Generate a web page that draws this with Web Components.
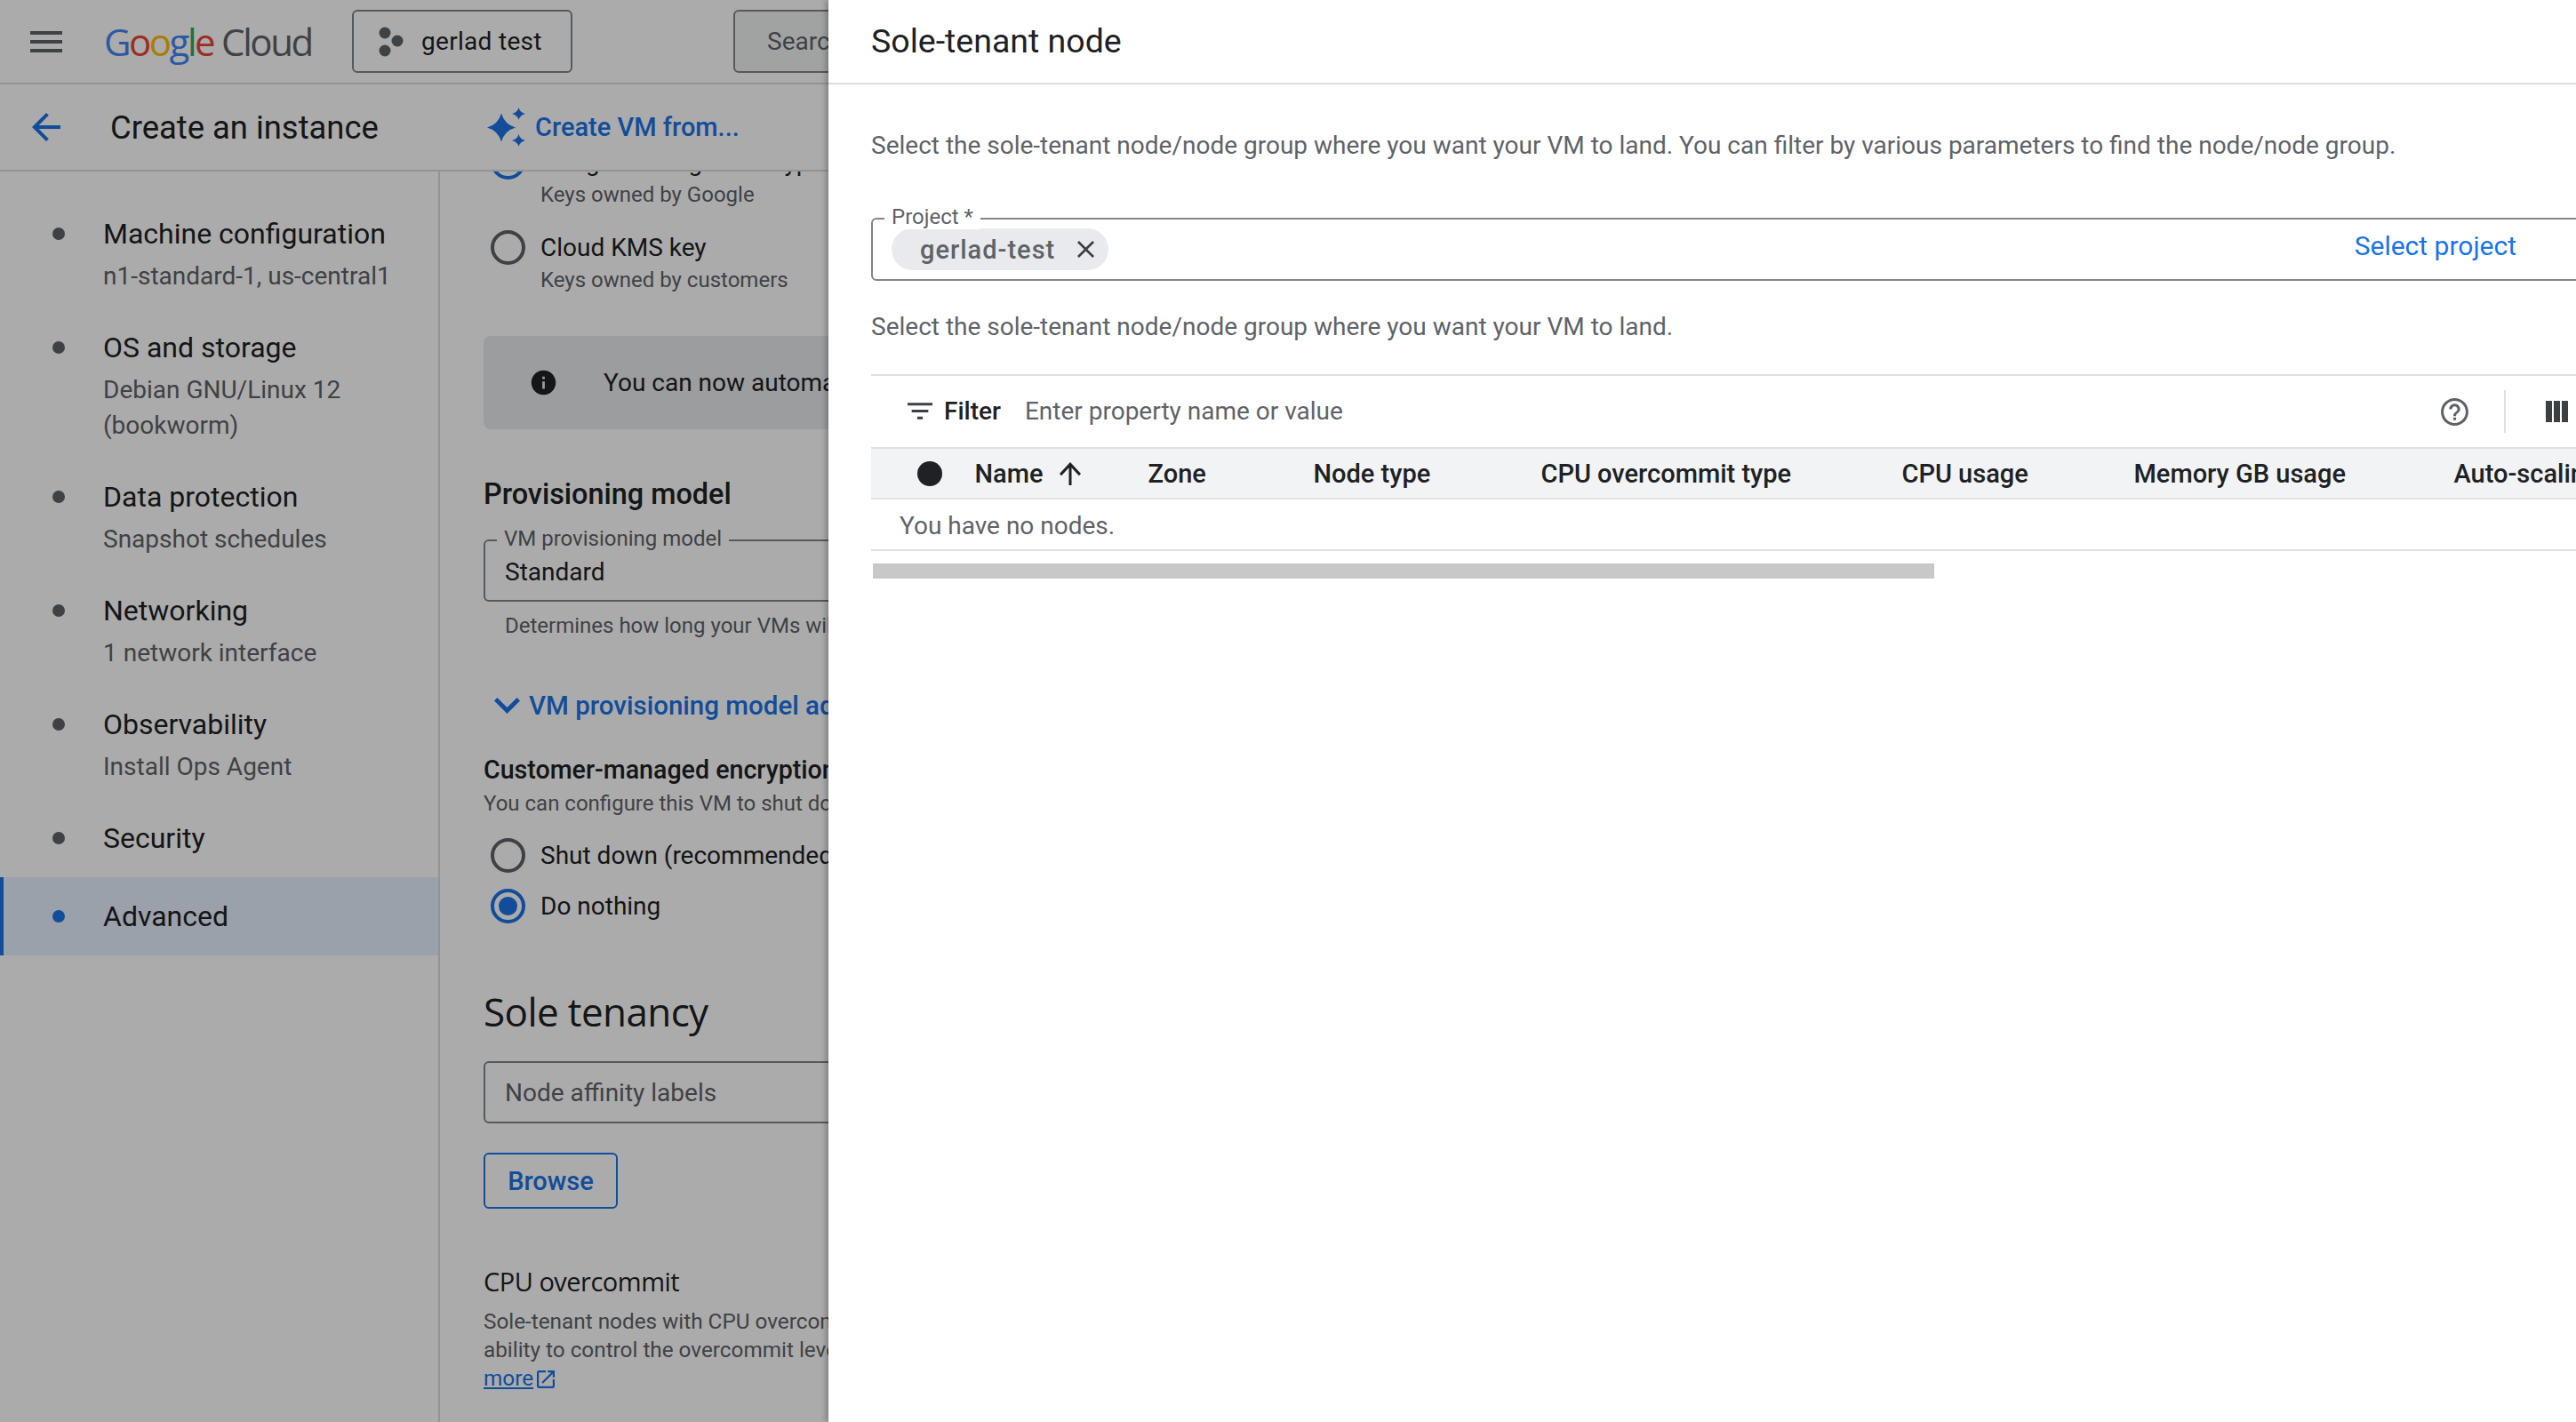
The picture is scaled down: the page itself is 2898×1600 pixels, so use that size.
<!DOCTYPE html>
<html>
<head>
<meta charset="utf-8">
<title>Create an instance</title>
<style>
html, body {margin: 0; height: 1600px; overflow: hidden; background: #fff; font-family: Roboto, "Liberation Sans", sans-serif; color: #202124;}
gc-console {position: relative; width: 2898px; height: 1600px; overflow: hidden;}
</style>
</head>
<body>
<gc-console>
    <gc-top-bar slot="top"></gc-top-bar>
    <gc-page-header slot="top" title-text="Create an instance"></gc-page-header>
    <gc-nav slot="nav">
        <gc-nav-item label="Machine configuration">n1-standard-1, us-central1</gc-nav-item>
        <gc-nav-item label="OS and storage">Debian GNU/Linux 12<br>(bookworm)</gc-nav-item>
        <gc-nav-item label="Data protection">Snapshot schedules</gc-nav-item>
        <gc-nav-item label="Networking">1 network interface</gc-nav-item>
        <gc-nav-item label="Observability">Install Ops Agent</gc-nav-item>
        <gc-nav-item label="Security"></gc-nav-item>
        <gc-nav-item label="Advanced" active></gc-nav-item>
    </gc-nav>
    <gc-instance-form slot="form"></gc-instance-form>
    <gc-node-panel slot="panel"></gc-node-panel>
</gc-console>

<script>
const icons = {
    menu: '<svg width="48" height="48" viewBox="0 0 24 24" fill="#5f6368"><path d="M3 18h18v-2H3v2zm0-5h18v-2H3v2zm0-7v2h18V6H3z"/></svg>',
    back: '<svg width="48" height="48" viewBox="0 0 24 24" fill="#1a73e8"><path d="M20 11H7.830l5.590-5.590L12 4l-8 8 8 8 1.410-1.410L7.830 13H20v-2z"/></svg>',
    spark: '<svg width="43" height="44" viewBox="0 0 43 44" fill="#1a73e8"><path d="M16 6.500Q19.500 19 32 22.500 19.500 26 16 38.500 12.500 26 0 22.500 12.500 19 16 6.500Z"/><path d="M35.500 0Q37 5.500 43 7 37 8.500 35.500 14 34 8.500 28 7 34 5.500 35.500 0Z"/><path d="M35.500 30Q37 35.500 43 37 37 38.500 35.500 44 34 38.500 28 37 34 35.500 35.500 30Z"/></svg>',
    project: '<svg width="30" height="34" viewBox="0 0 30 34" fill="#5f6368"><circle cx="7" cy="7" r="6.500"/><circle cx="7" cy="27" r="6.500"/><circle cx="21" cy="16" r="6.500"/></svg>',
    info: '<svg width="33" height="33" viewBox="0 0 24 24" fill="#202124"><path d="M12 2C6.480 2 2 6.480 2 12s4.480 10 10 10 10-4.480 10-10S17.520 2 12 2zm1 15h-2v-6h2v6zm0-8h-2V7h2v2z"/></svg>',
    chevron: '<svg width="29" height="18" viewBox="6 8.590 12 7.410" fill="#1a73e8"><path d="M16.590 8.590L12 13.170 7.410 8.590 6 10l6 6 6-6z"/></svg>',
    external: '<svg width="20" height="20" viewBox="3 3 18 18" fill="#1a73e8"><path d="M19 19H5V5h7V3H5c-1.110 0-2 .9-2 2v14c0 1.100.89 2 2 2h14c1.100 0 2-.9 2-2v-7h-2v7zM14 3v2h3.590l-9.830 9.830 1.410 1.410L19 6.410V10h2V3h-7z"/></svg>',
    close: '<svg width="19" height="19" viewBox="5 5 14 14" fill="#3c4043"><path d="M19 6.410L17.590 5 12 10.590 6.410 5 5 6.410 10.590 12 5 17.590 6.410 19 12 13.410 17.590 19 19 17.590 13.410 12z"/></svg>',
    filter: '<svg width="28" height="19" viewBox="3 6 18 12" fill="#3c4043"><path d="M10 18h4v-2h-4v2zM3 6v2h18V6H3zm3 7h12v-2H6v2z"/></svg>',
    up: '<svg width="24" height="26" viewBox="4 4 16 16" preserveAspectRatio="none" fill="#202124"><path d="M4 12l1.410 1.410L11 7.830V20h2V7.830l5.580 5.590L20 12l-8-8-8 8z"/></svg>',
    help: '<svg width="31" height="31" viewBox="2 2 20 20" fill="#5f6368"><path d="M11 18h2v-2h-2v2zm1-16C6.480 2 2 6.480 2 12s4.480 10 10 10 10-4.480 10-10S17.520 2 12 2zm0 18c-4.410 0-8-3.590-8-8s3.590-8 8-8 8 3.590 8 8-3.590 8-8 8zm0-14c-2.210 0-4 1.790-4 4h2c0-1.100.9-2 2-2s2 .9 2 2c0 2-3 1.750-3 5h2c0-2.250 3-2.500 3-5 0-2.210-1.790-4-4-4z"/></svg>',
    columns: '<svg width="25" height="24" viewBox="0 0 25 24" fill="#3c4043"><rect width="7" height="24"/><rect x="9" width="7" height="24"/><rect x="18" width="7" height="24"/></svg>'
};

class GcConsole extends HTMLElement {
    constructor() {
        super();
        const root = this.attachShadow({mode: 'open'});
        root.innerHTML = `
            <style>
            :host {display: block;}
            .page {display: flex; flex-direction: column; height: 100%;}
            .main {flex: 1; display: flex; min-height: 0;}
            .scrim {position: absolute; inset: 0; background: rgba(0,0,0,.33);}
            </style>
            <div class="page">
                <slot name="top"></slot>
                <div class="main">
                    <slot name="nav"></slot>
                    <slot name="form"></slot>
                </div>
            </div>
            <div class="scrim"></div>
            <slot name="panel"></slot>
        `;
    }
}

class GcTopBar extends HTMLElement {
    constructor() {
        super();
        const root = this.attachShadow({mode: 'open'});
        root.innerHTML = `
            <style>
            :host {display: flex; align-items: center; height: 93px; border-bottom: 2px solid #dadce0; box-sizing: content-box; padding-left: 28px; background: #fff; flex: none;}
            .menu {display: flex; width: 48px;}
            .logo {margin-left: 41px; font: 42px/1 "Open Sans", sans-serif; letter-spacing: -2.500px; white-space: nowrap; width: 279px;}
            .logo .cloud {color: #5f6368; margin-left: 9px; letter-spacing: -2.400px;}
            .project {display: flex; align-items: center; box-sizing: border-box; width: 248px; height: 71px; border: 2px solid #80868b; border-radius: 6px; padding-left: 28px; font-size: 28px; letter-spacing: .3px;}
            .project span {margin-left: 18px;}
            .search {margin-left: 181px; flex: 1; height: 71px; box-sizing: border-box; border: 2px solid #80868b; border-radius: 6px; background: #f1f3f4; padding-left: 36px; display: flex; align-items: center; font-size: 28px; color: #5f6368;}
            </style>
            <div class="menu">${icons.menu}</div>
            <div class="logo"><span style="color:#4285f4">G</span><span style="color:#ea4335">o</span><span style="color:#fbbc04">o</span><span style="color:#4285f4">g</span><span style="color:#34a853">l</span><span style="color:#ea4335">e</span><span class="cloud">Cloud</span></div>
            <div class="project">${icons.project}<span>gerlad test</span></div>
            <div class="search">Search</div>
        `;
    }
}

class GcPageHeader extends HTMLElement {
    constructor() {
        super();
        const root = this.attachShadow({mode: 'open'});
        root.innerHTML = `
            <style>
            :host {display: flex; align-items: center; height: 96px; border-bottom: 2px solid #dadce0; padding-left: 28px; background: #fff; flex: none;}
            .back {display: flex; width: 48px;}
            h1 {margin: 0 0 0 48px; width: 424px; font-size: 36.400px; font-weight: 400; white-space: nowrap;}
            .spark {display: flex;}
            .from {margin-left: 11px; font-size: 29px; font-weight: 500; color: #1a73e8; white-space: nowrap;}
            </style>
            <div class="back">${icons.back}</div>
            <h1></h1>
            <div class="spark">${icons.spark}</div>
            <div class="from">Create VM from...</div>
        `;
        root.querySelector('h1').textContent = this.getAttribute('title-text');
    }
}

class GcNav extends HTMLElement {
    constructor() {
        super();
        this.attachShadow({mode: 'open'}).innerHTML = `
            <style>
            :host {display: block; box-sizing: border-box; width: 495px; flex: none; padding-top: 26px; border-right: 2px solid #dadce0;}
            </style>
            <slot></slot>
        `;
    }
}

class GcNavItem extends HTMLElement {
    constructor() {
        super();
        const root = this.attachShadow({mode: 'open'});
        root.innerHTML = `
            <style>
            :host {display: flex; padding: 20px 0; position: relative;}
            :host([active]) {background: #e8f0fe;}
            :host([active])::before {content: ""; position: absolute; left: 0; top: 0; bottom: 0; width: 4px; background: #1a73e8;}
            .dot {width: 14px; height: 14px; border-radius: 50%; background: #5f6368; margin: 17px 43px 0 59px; flex: none;}
            :host([active]) .dot {background: #1a73e8;}
            .label {font-size: 32px; line-height: 48px; white-space: nowrap;}
            .sub {font-size: 28px; line-height: 40px; margin: 4px 0 -4px; color: #5f6368; white-space: nowrap;}
            </style>
            <div class="dot"></div>
            <div>
                <div class="label"></div>
                <div class="sub"><slot></slot></div>
            </div>
        `;
        root.querySelector('.label').textContent = this.getAttribute('label');
    }
}

class GcRadio extends HTMLElement {
    constructor() {
        super();
        const root = this.attachShadow({mode: 'open'});
        root.innerHTML = `
            <style>
            :host {display: flex; margin-left: 8px;}
            .ring {box-sizing: border-box; width: 39px; height: 39px; border: 4px solid #5f6368; border-radius: 50%; flex: none; display: flex; align-items: center; justify-content: center;}
            :host([checked]) .ring {border-color: #1a73e8;}
            :host([checked]) .ring::after {content: ""; width: 21px; height: 21px; border-radius: 50%; background: #1a73e8;}
            .text {margin-left: 17px; font-size: 28px; line-height: 40px; white-space: nowrap;}
            .hint {margin: -1px 0 0 17px; font-size: 24px; line-height: 34px; color: #5f6368; white-space: nowrap;}
            </style>
            <div class="ring"></div>
            <div>
                <div class="text"><slot></slot></div>
                <div class="hint"></div>
            </div>
        `;
        root.querySelector('.hint').textContent = this.getAttribute('hint') || '';
    }
}

class GcField extends HTMLElement {
    constructor() {
        super();
        const root = this.attachShadow({mode: 'open'});
        root.innerHTML = `
            <style>
            :host {display: block; position: relative; box-sizing: border-box; height: 70px; border: 2px solid #80868b; border-radius: 6px; background: #fff;}
            .label {position: absolute; left: 13px; top: -17px; padding: 0 8px; background: #fff; font-size: 24px; line-height: 28px; color: #5f6368; white-space: nowrap;}
            .label:empty {display: none;}
            .body {display: flex; align-items: center; height: 100%;}
            </style>
            <div class="label"></div>
            <div class="body"><slot></slot></div>
        `;
        root.querySelector('.label').textContent = this.getAttribute('label') || '';
    }
}

class GcInstanceForm extends HTMLElement {
    constructor() {
        super();
        const root = this.attachShadow({mode: 'open'});
        root.innerHTML = `
            <style>
            :host {display: block; flex: 1; min-width: 0; overflow: hidden; background: #fff;}
            .scroll {padding-left: 49px; margin-top: -30px; width: 900px;}
            .nowrap, h2, h3, h4, p {white-space: nowrap; margin: 0;}
            .info {display: flex; align-items: center; margin-top: 46px; height: 105px; border-radius: 8px; background: #e8eaed; padding-left: 51px; font-size: 28px;}
            .info span {margin-left: 51px;}
            .info svg {flex: none;}
            h3 {margin-top: 51px; font-size: 32.400px; line-height: 44px; font-weight: 500;}
            .value {padding: 2px 0 0 22px; font-size: 28px;}
            .help {margin: 11px 0 0 24px; font-size: 24px; line-height: 32px; color: #5f6368;}
            .toggle {display: flex; align-items: center; margin: 52px 0 0 12px; font-size: 29.500px; line-height: 44px; font-weight: 500; color: #1a73e8; white-space: nowrap;}
            .toggle span {margin-left: 10px;}
            h4 {font-size: 28.600px; line-height: 36px; font-weight: 500;}
            h4.wide {font: 500 29px/36px "Open Sans", sans-serif; letter-spacing: -.5px;}
            .desc {margin-top: 3px; font-size: 24px; line-height: 34px; color: #5f6368;}
            h2 {margin-top: 71px; font: 400 44px/56px "Open Sans", sans-serif; letter-spacing: -.6px;}
            .placeholder {padding-left: 22px; font-size: 28px; color: #5f6368;}
            .browse {display: inline-flex; align-items: center; justify-content: center; box-sizing: border-box; width: 151px; height: 63px; margin-top: 33px; border: 2px solid #1a73e8; border-radius: 6px; font-size: 29px; font-weight: 500; color: #1a73e8;}
            .lines {margin-top: 11px; font-size: 24.300px; line-height: 32px; color: #5f6368;}
            .lines a {color: #1a73e8; text-decoration: underline;}
            .lines svg {vertical-align: -3px; margin-left: 4px;}
            </style>
            <div class="scroll">
                <gc-radio checked hint="Keys owned by Google">Google-managed encryption key</gc-radio>
                <gc-radio style="margin-top:23px" hint="Keys owned by customers">Cloud KMS key</gc-radio>
                <div class="info">${icons.info}<span class="nowrap">You can now automate</span></div>
                <h3>Provisioning model</h3>
                <gc-field style="margin-top:29px" label="VM provisioning model"><div class="value">Standard</div></gc-field>
                <p class="help">Determines how long your VMs will run</p>
                <div class="toggle">${icons.chevron}<span>VM provisioning model advanced settings</span></div>
                <h4 style="margin-top:32px">Customer-managed encryption key revocation</h4>
                <p class="desc">You can configure this VM to shut down</p>
                <gc-radio style="margin-top:22px">Shut down (recommended)</gc-radio>
                <gc-radio style="margin-top:18px" checked>Do nothing</gc-radio>
                <h2>Sole tenancy</h2>
                <gc-field style="margin-top:28px"><div class="placeholder">Node affinity labels</div></gc-field>
                <div class="browse">Browse</div>
                <h4 class="wide" style="margin-top:64px">CPU overcommit</h4>
                <p class="lines">Sole-tenant nodes with CPU overcommit give you the<br>ability to control the overcommit level on them. Learn<br><a>more</a>${icons.external}</p>
            </div>
        `;
    }
}

class GcNodeTable extends HTMLElement {
    constructor() {
        super();
        const root = this.attachShadow({mode: 'open'});
        root.innerHTML = `
            <style>
            :host {display: block;}
            .filter {position: relative; display: flex; align-items: center; height: 78px; padding: 0 0 2px 41px; border-top: 2px solid #e0e0e0; font-size: 28px; white-space: nowrap;}
            .filter b {margin-left: 13px; font-weight: 500;}
            .filter span {margin-left: 27px; color: #5f6368;}
            .tools {position: absolute; left: 1766px; top: 0; height: 100%; display: flex; align-items: center;}
            .sep {width: 2px; height: 48px; background: #e0e0e0; margin: 0 45px 0 40px;}
            .head {display: grid; grid-template-columns: 65px 195px 186px 256px 406px 261px 360px auto; align-items: center; height: 55px; padding-left: 51.500px; background: #f1f3f4; border-top: 2px solid #e0e0e0; border-bottom: 2px solid #e0e0e0; font-size: 29px; font-weight: 500; white-space: nowrap;}
            .head .dot {width: 28px; height: 28px; border-radius: 50%; background: #202124;}
            .head .name {display: flex; align-items: center; gap: 18px;}
            .head svg {display: block;}
            .empty {height: 56px; line-height: 60px; padding-left: 32px; border-bottom: 2px solid #e0e0e0; font-size: 28px; color: #5f6368;}
            .bar {margin: 14px 0 0 2px; width: 1194px; height: 17px; background: #c8c8c8;}
            </style>
            <div class="filter">
                ${icons.filter}<b>Filter</b><span>Enter property name or value</span>
                <div class="tools">${icons.help}<div class="sep"></div>${icons.columns}</div>
            </div>
            <div class="head">
                <div class="dot"></div>
                <div class="name">Name ${icons.up}</div>
                <div>Zone</div>
                <div>Node type</div>
                <div>CPU overcommit type</div>
                <div>CPU usage</div>
                <div>Memory GB usage</div>
                <div>Auto-scaling</div>
            </div>
            <div class="empty">You have no nodes.</div>
            <div class="bar"></div>
        `;
    }
}

class GcNodePanel extends HTMLElement {
    constructor() {
        super();
        const root = this.attachShadow({mode: 'open'});
        root.innerHTML = `
            <style>
            :host {position: absolute; left: 932px; top: 0; bottom: 0; width: 2068px; background: #fff; box-shadow: -3px 0 6px rgba(0,0,0,.25);}
            header {height: 93px; line-height: 92px; padding-left: 48px; border-bottom: 2px solid #dadce0; font-size: 37.500px; white-space: nowrap;}
            .body {padding-left: 48px;}
            p {margin: 0; font-size: 28px; line-height: 40px; color: #5f6368; white-space: nowrap;}
            gc-field {margin-top: 61px; height: 71px;}
            .chip {display: flex; align-items: center; box-sizing: border-box; width: 244px; height: 47px; margin-left: 21px; padding-left: 32px; border-radius: 24px; background: #e8eaed; font-size: 29px; font-weight: 500; letter-spacing: 1px; color: #5f6368;}
            .chip svg {margin-left: 25px;}
            .select {margin-left: auto; padding-right: 167px; margin-top: -9px; font-size: 30px; color: #1a73e8; white-space: nowrap;}
            gc-node-table {margin-top: 33px;}
            </style>
            <header>Sole-tenant node</header>
            <div class="body">
                <p style="margin-top:49px">Select the sole-tenant node/node group where you want your VM to land. You can filter by various parameters to find the node/node group.</p>
                <gc-field label="Project *">
                    <div class="chip">gerlad-test${icons.close}</div>
                    <div class="select">Select project</div>
                </gc-field>
                <p style="margin-top:32px">Select the sole-tenant node/node group where you want your VM to land.</p>
                <gc-node-table></gc-node-table>
            </div>
        `;
    }
}

customElements.define('gc-console', GcConsole);
customElements.define('gc-top-bar', GcTopBar);
customElements.define('gc-page-header', GcPageHeader);
customElements.define('gc-nav', GcNav);
customElements.define('gc-nav-item', GcNavItem);
customElements.define('gc-radio', GcRadio);
customElements.define('gc-field', GcField);
customElements.define('gc-instance-form', GcInstanceForm);
customElements.define('gc-node-table', GcNodeTable);
customElements.define('gc-node-panel', GcNodePanel);
</script>
</body>
</html>
